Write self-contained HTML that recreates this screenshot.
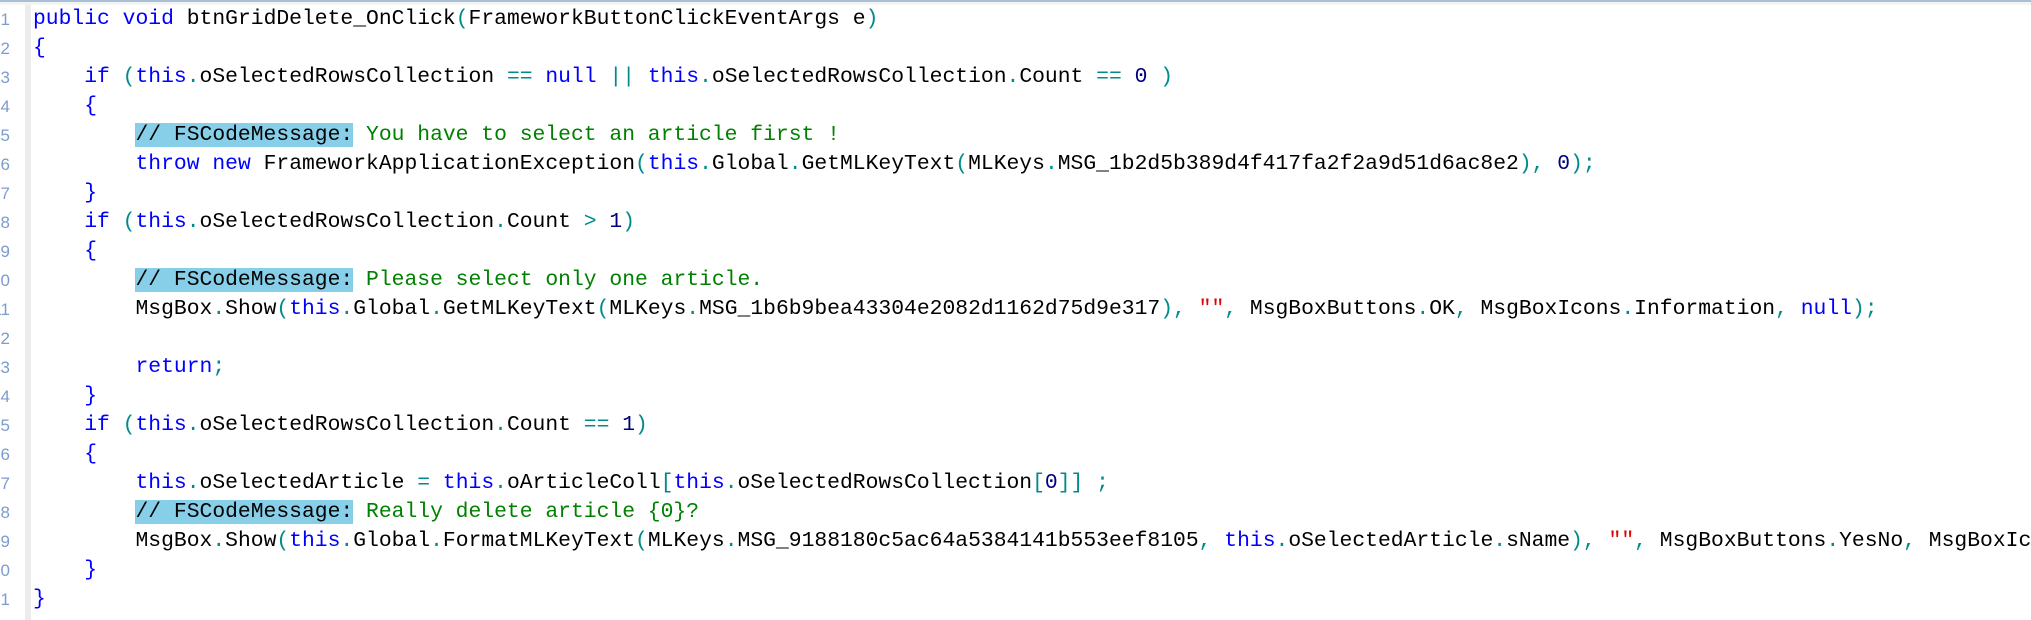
<!DOCTYPE html>
<html><head><meta charset="utf-8"><style>
html,body{margin:0;padding:0;background:#fff;width:2031px;height:620px;overflow:hidden;position:relative}
.top{position:absolute;left:0;top:0;width:2031px;height:2px;background:#a9bfd6}
.top2{position:absolute;left:0;top:2px;width:2031px;height:3px;background:#f3f3f3}
.gut{position:absolute;left:25px;top:5px;width:6px;height:615px;background:#ececec}
.ln{position:absolute;left:-20px;width:30px;text-align:right;font:17px "Liberation Sans",sans-serif;color:#7d9ccd;line-height:29px}
.code{position:absolute;left:33px;top:5px;width:1998px;height:615px;overflow:hidden;font-family:"Liberation Mono",monospace;font-size:21.35px;line-height:29px;color:#000}
.code div{height:29px;white-space:pre}
.k{color:#0000ff}.p{color:#008b8b}.n{color:#000080}.c{color:#008000}.s{color:#e00000}
.h{background:#87cee9;color:#000}
</style></head><body>
<div class="top"></div><div class="top2"></div><div class="gut"></div>
<div class="ln" style="top:5px">1</div><div class="ln" style="top:34px">2</div><div class="ln" style="top:63px">3</div><div class="ln" style="top:92px">4</div><div class="ln" style="top:121px">5</div><div class="ln" style="top:150px">6</div><div class="ln" style="top:179px">7</div><div class="ln" style="top:208px">8</div><div class="ln" style="top:237px">9</div><div class="ln" style="top:266px">10</div><div class="ln" style="top:295px">11</div><div class="ln" style="top:324px">12</div><div class="ln" style="top:353px">13</div><div class="ln" style="top:382px">14</div><div class="ln" style="top:411px">15</div><div class="ln" style="top:440px">16</div><div class="ln" style="top:469px">17</div><div class="ln" style="top:498px">18</div><div class="ln" style="top:527px">19</div><div class="ln" style="top:556px">20</div><div class="ln" style="top:585px">21</div>
<div class="code"><div><span class="k">public</span> <span class="k">void</span> btnGridDelete_OnClick<span class="p">(</span>FrameworkButtonClickEventArgs e<span class="p">)</span></div><div><span class="k">{</span></div><div>    <span class="k">if</span> <span class="p">(</span><span class="k">this</span><span class="p">.</span>oSelectedRowsCollection <span class="p">==</span> <span class="k">null</span> <span class="p">||</span> <span class="k">this</span><span class="p">.</span>oSelectedRowsCollection<span class="p">.</span>Count <span class="p">==</span> <span class="n">0</span> <span class="p">)</span></div><div>    <span class="k">{</span></div><div>        <span class="h">// FSCodeMessage:</span><span class="c"> You have to select an article first !</span></div><div>        <span class="k">throw</span> <span class="k">new</span> FrameworkApplicationException<span class="p">(</span><span class="k">this</span><span class="p">.</span>Global<span class="p">.</span>GetMLKeyText<span class="p">(</span>MLKeys<span class="p">.</span>MSG_1b2d5b389d4f417fa2f2a9d51d6ac8e2<span class="p">),</span> <span class="n">0</span><span class="p">);</span></div><div>    <span class="k">}</span></div><div>    <span class="k">if</span> <span class="p">(</span><span class="k">this</span><span class="p">.</span>oSelectedRowsCollection<span class="p">.</span>Count <span class="p">&gt;</span> <span class="n">1</span><span class="p">)</span></div><div>    <span class="k">{</span></div><div>        <span class="h">// FSCodeMessage:</span><span class="c"> Please select only one article.</span></div><div>        MsgBox<span class="p">.</span>Show<span class="p">(</span><span class="k">this</span><span class="p">.</span>Global<span class="p">.</span>GetMLKeyText<span class="p">(</span>MLKeys<span class="p">.</span>MSG_1b6b9bea43304e2082d1162d75d9e317<span class="p">),</span> <span class="s">""</span><span class="p">,</span> MsgBoxButtons<span class="p">.</span>OK<span class="p">,</span> MsgBoxIcons<span class="p">.</span>Information<span class="p">,</span> <span class="k">null</span><span class="p">);</span></div><div> </div><div>        <span class="k">return</span><span class="p">;</span></div><div>    <span class="k">}</span></div><div>    <span class="k">if</span> <span class="p">(</span><span class="k">this</span><span class="p">.</span>oSelectedRowsCollection<span class="p">.</span>Count <span class="p">==</span> <span class="n">1</span><span class="p">)</span></div><div>    <span class="k">{</span></div><div>        <span class="k">this</span><span class="p">.</span>oSelectedArticle <span class="p">=</span> <span class="k">this</span><span class="p">.</span>oArticleColl<span class="p">[</span><span class="k">this</span><span class="p">.</span>oSelectedRowsCollection<span class="p">[</span><span class="n">0</span><span class="p">]]</span> <span class="p">;</span></div><div>        <span class="h">// FSCodeMessage:</span><span class="c"> Really delete article {0}?</span></div><div>        MsgBox<span class="p">.</span>Show<span class="p">(</span><span class="k">this</span><span class="p">.</span>Global<span class="p">.</span>FormatMLKeyText<span class="p">(</span>MLKeys<span class="p">.</span>MSG_9188180c5ac64a5384141b553eef8105<span class="p">,</span> <span class="k">this</span><span class="p">.</span>oSelectedArticle<span class="p">.</span>sName<span class="p">),</span> <span class="s">""</span><span class="p">,</span> MsgBoxButtons<span class="p">.</span>YesNo<span class="p">,</span> MsgBoxIcons<span class="p">.</span>Question<span class="p">);</span></div><div>    <span class="k">}</span></div><div><span class="k">}</span></div></div>
</body></html>
